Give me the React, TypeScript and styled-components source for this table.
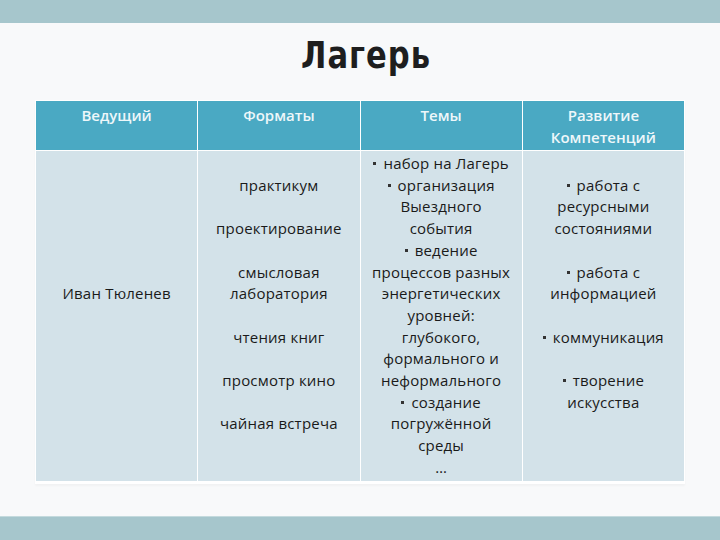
import React from 'react';
import styled, { createGlobalStyle } from 'styled-components';

const GlobalStyle = createGlobalStyle`
	html, body {
		margin: 0;
		padding: 0;
		background: #f8f9fa;
	}
	body {
		font-family: 'Open Sans', 'Liberation Sans', sans-serif;
	}
`;

// Page frame with the two teal bars
const Page = styled.div`
	width: 720px;
	height: 540px;
	display: flex;
	flex-direction: column;
	background: #f8f9fa;
	overflow: hidden;
`;

const Bar = styled.div<{ bottom?: boolean }>`
	height: 23px;
	flex: none;
	background: #a6c6cc;
	${(props) => props.bottom && `border-top: 1px solid #c4dadd; margin-top: auto;`}
`;

const Content = styled.div`
	flex: 1;
	display: flex;
	flex-direction: column;
	align-items: center;
	padding-top: 10px;
`;

const Title = styled.h1`
	margin: 0 0 0 12px;
	height: 67px;
	font-family: 'DejaVu Sans Condensed', 'DejaVu Sans', sans-serif;
	font-weight: 900;
	font-size: 34px;
	letter-spacing: 1px;
	line-height: 46px;
	color: #1e1e1e;
	transform: scaleY(1.12);
`;

// Table grid
const Table = styled.div`
	width: 648px;
	display: grid;
	grid-template-columns: repeat(4, 1fr);
	background: #ffffff;
	border: 1px solid #ffffff;
	border-bottom-width: 3px;
	box-shadow: 0 2px 2px rgba(0, 0, 0, 0.03);
	column-gap: 1px;
	row-gap: 1px;
`;

const HeadCell = styled.div`
	background: #4aa9c3;
	color: #eef7fa;
	height: 49px;
	box-sizing: border-box;
	padding-top: 4px;
	text-align: center;
	font-family: 'Open Sans', 'Liberation Sans', sans-serif;
	font-size: 15px;
	font-weight: 600;
	line-height: 21.5px;
`;

const BodyCell = styled.div`
	background: #d3e2e9;
	height: 330px;
	box-sizing: border-box;
	padding-top: 2px;
	text-align: center;
	color: #1a1a1a;
	font-size: 15px;
	letter-spacing: 0.2px;
	line-height: 21.7px;
`;

const Line = styled.div`
	white-space: nowrap;
`;

const Bullet = styled.span`
	display: inline-block;
	width: 3px;
	height: 3px;
	background: #333;
	vertical-align: middle;
	margin: 0 7px 3px 0;
`;

const blank = '\u00a0';

const formats = [blank, 'практикум', blank, 'проектирование', blank, 'смысловая', 'лаборатория', blank, 'чтения книг', blank, 'просмотр кино', blank, 'чайная встреча'];

const themes = [
    '*набор на Лагерь',
    '*организация',
    'Выездного',
    'события',
    '*ведение',
    'процессов разных',
    'энергетических',
    'уровней:',
    'глубокого,',
    'формального и',
    'неформального',
    '*создание',
    'погружённой',
    'среды',
    '…',
];

const skills = [blank, '*работа с', 'ресурсными', 'состояниями', blank, '*работа с', 'информацией', blank, '*коммуникация', blank, '*творение', 'искусства'];

const leader = [blank, blank, blank, blank, blank, blank, 'Иван Тюленев'];

const renderLines = (lines: string[]) =>
    lines.map((text, i) =>
        text.startsWith('*') ? (
            <Line key={i}>
                <Bullet />
                {text.slice(1)}
            </Line>
        ) : (
            <Line key={i}>{text}</Line>
        ),
    );

export default function App() {
    return (
        <>
            <GlobalStyle />
            <Page>
                <Bar />
                <Content>
                    <Title>Лагерь</Title>
                    <Table>
                        <HeadCell>Ведущий</HeadCell>
                        <HeadCell>Форматы</HeadCell>
                        <HeadCell>Темы</HeadCell>
                        <HeadCell>
                            Развитие
                            <br />
                            Компетенций
                        </HeadCell>
                        <BodyCell>{renderLines(leader)}</BodyCell>
                        <BodyCell>{renderLines(formats)}</BodyCell>
                        <BodyCell>{renderLines(themes)}</BodyCell>
                        <BodyCell>{renderLines(skills)}</BodyCell>
                    </Table>
                </Content>
                <Bar bottom />
            </Page>
        </>
    );
}
